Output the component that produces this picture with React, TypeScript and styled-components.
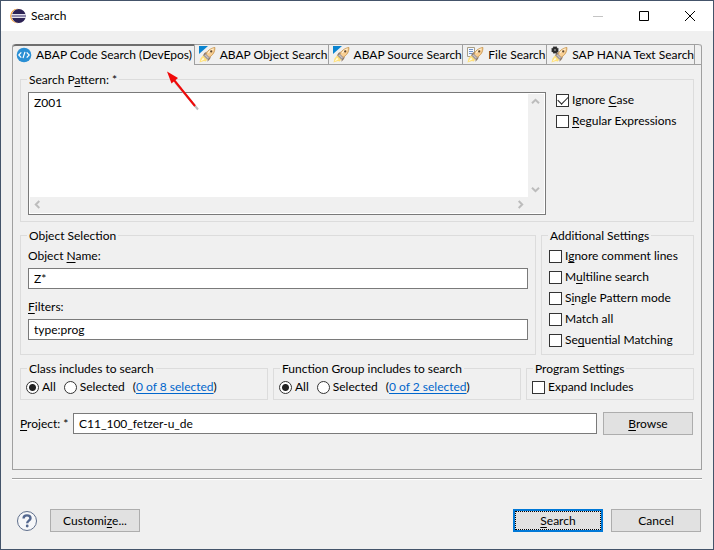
import React, { useState } from "react";
import styled, { createGlobalStyle, css } from "styled-components";

const GlobalStyle = createGlobalStyle`
  * { box-sizing: border-box; }
  body { margin: 0; background: #f0f0f0; }
  body, button, input, textarea {
    font-family: Lato, "Open Sans", sans-serif;
    font-size: 12px;
    line-height: 16px;
    color: #000;
  }
`;

const Dialog = styled.div`
  position: relative;
  display: flex;
  flex-direction: column;
  min-height: 100vh;
  border: 1px solid #44546a;
  background: #f0f0f0;
`;

const TitleBar = styled.header`
  display: flex;
  align-items: center;
  height: 30px;
  padding-left: 9px;
  gap: 5px;
  background: #fff;
`;

const Title = styled.h1`
  flex: 1;
  margin: 0;
  font-size: 12px;
  font-weight: 400;
`;

const CaptionButtons = styled.div`
  display: flex;
`;

const CaptionButton = styled.button`
  display: flex;
  align-items: center;
  justify-content: center;
  width: 46px;
  height: 28px;
  padding: 0;
  border: 0;
  background: none;
`;

const Folder = styled.main`
  display: flex;
  flex-direction: column;
  flex: 1;
  margin: 13px 11px 0;
  border: 1px solid #a0a0a0;
  border-top: 0;
  border-radius: 3px 3px 0 0;
`;

const TabBar = styled.div`
  display: grid;
  grid-template-columns: 182fr 134fr 135fr 84fr 148fr 6px;
  height: 21px;
`;

const Tab = styled.button<{ $active?: boolean }>`
  display: flex;
  align-items: center;
  gap: 4px;
  min-width: 0;
  border: 0;
  border-right: 1px solid #a0a0a0;
  background: none;
  white-space: nowrap;
  text-align: left;
  ${(p) =>
    p.$active
      ? css`
          padding: 0 0 2px 3px;
          border-top: 2px solid #6e6e6e;
          border-top-left-radius: 3px;
        `
      : css`
          padding: 0 0 0 4px;
          border-top: 1px solid #a0a0a0;
          border-bottom: 1px solid #a0a0a0;
        `}
  svg { flex: none; }
`;

const TabFiller = styled.div`
  border-top: 1px solid #a0a0a0;
  border-bottom: 1px solid #a0a0a0;
  border-top-right-radius: 3px;
`;

const Page = styled.div`
  display: flex;
  flex-direction: column;
  flex: 1;
  gap: 6px;
  padding: 7px 7px 33px;
`;

const Group = styled.fieldset`
  min-width: 0;
  margin: 0;
  padding: 0 7px;
  border: 1px solid #dcdcdc;
`;

const Legend = styled.legend`
  margin-left: -1px;
  padding: 0 2px;
  line-height: 15px;
`;

const PatternRow = styled.div`
  display: flex;
  gap: 10px;
  padding: 5px 0 6px;
`;

const EditorFrame = styled.div`
  display: grid;
  grid-template-columns: 1fr 16px;
  grid-template-rows: 1fr 16px;
  flex: 1;
  height: 123px;
  padding: 1px;
  border: 1px solid #7a7a7a;
  background: #fff;
`;

const Editor = styled.textarea`
  width: 100%;
  height: 100%;
  padding: 1px 4px;
  border: 0;
  outline: 0;
  resize: none;
  overflow: hidden;
  background: #fff;
`;

const ScrollTrack = styled.div<{ $horizontal?: boolean }>`
  display: flex;
  flex-direction: ${(p) => (p.$horizontal ? "row" : "column")};
  justify-content: space-between;
  background: #f0f0f0;
`;

const ScrollCorner = styled.div`
  background: #f0f0f0;
`;

const ScrollButton = styled.button`
  display: flex;
  align-items: center;
  justify-content: center;
  width: 15px;
  height: 15px;
  padding: 0;
  border: 0;
  background: none;
`;

const SideOptions = styled.div`
  width: 130px;
`;

const OptionStack = styled.div`
  display: flex;
  flex-direction: column;
  gap: 5px;
`;

const Choice = styled.label`
  display: flex;
  align-items: center;
  gap: 3px;
  height: 16px;
  white-space: nowrap;
`;

const CheckBox = styled.input.attrs({ type: "checkbox" })`
  appearance: none;
  flex: none;
  width: 13px;
  height: 13px;
  margin: 0;
  border: 1px solid #333;
  background: #fff;
  &:checked::after {
    content: "";
    display: block;
    width: 9px;
    height: 5px;
    margin: 2px 0 0 1px;
    border-left: 1px solid #222;
    border-bottom: 1px solid #222;
    transform: translateY(-1px) rotate(-45deg);
  }
`;

const Radio = styled.input.attrs({ type: "radio" })`
  appearance: none;
  flex: none;
  width: 13px;
  height: 13px;
  margin: 0;
  border: 1px solid #333;
  border-radius: 50%;
  background: #fff;
  &:checked {
    background: radial-gradient(circle, #222 3px, #fff 4px);
  }
`;

const SelectionRow = styled.div`
  display: grid;
  grid-template-columns: 1fr 153px;
  gap: 5px;
`;

const IncludesRow = styled.div`
  display: grid;
  grid-template-columns: 1fr 1fr 168px;
  gap: 5px;
`;

const FieldStack = styled.div`
  display: flex;
  flex-direction: column;
  gap: 10px;
  padding: 5px 0 14px;
`;

const Field = styled.div`
  display: flex;
  flex-direction: column;
  gap: 4px;
`;

const TextInput = styled.input.attrs({ type: "text" })`
  flex: 1 0 auto;
  min-width: 0;
  height: 21px;
  padding: 0 5px;
  border: 1px solid #7a7a7a;
  outline: 0;
  background: #fff;
`;

const OptionPadding = styled.div`
  padding: 5px 0 6px;
`;

const RadioRow = styled.div`
  display: flex;
  align-items: center;
  gap: 8px;
  margin-left: -2px;
  padding: 3px 0 4px;
  white-space: nowrap;
`;

const Link = styled.a`
  color: #0066cc;
  text-decoration: underline;
  text-underline-offset: 2px;
`;

const ProjectRow = styled.div`
  display: flex;
  align-items: center;
  gap: 6px;
  padding: 6px 1px 0 0;
`;

const ProjectLabel = styled.label`
  width: 47px;
  white-space: nowrap;
`;

const PushButton = styled.button<{ $primary?: boolean }>`
  width: 90px;
  height: 23px;
  padding: 0;
  border: ${(p) => (p.$primary ? "2px solid #0078d7" : "1px solid #adadad")};
  outline: ${(p) => (p.$primary ? "1px dotted #000" : "0")};
  outline-offset: -3px;
  background: #e1e1e1;
`;

const Separator = styled.hr`
  width: auto;
  height: 2px;
  margin: 8px 11px 0;
  border: 0;
  border-top: 1px solid #a0a0a0;
  border-bottom: 1px solid #fff;
`;

const Footer = styled.footer`
  display: flex;
  align-items: center;
  padding: 29px 12px 17px 15px;
  gap: 8px;
`;

const HelpButton = styled.button`
  display: flex;
  margin-right: 4px;
  padding: 0;
  border: 0;
  background: none;
`;

const Spacer = styled.div`
  flex: 1;
`;

const Mnemonic = styled.u`
  text-decoration: underline;
  text-decoration-skip-ink: none;
  text-underline-offset: 2px;
`;

const Pointer = styled.svg`
  position: absolute;
  left: 161px;
  top: 66px;
  pointer-events: none;
`;

/** Renders text in which the character after "&" is underlined. */
function Keyed({ text }: { text: string }) {
  const at = text.indexOf("&");
  if (at < 0) return <span>{text}</span>;
  return (
    <span>
      {text.slice(0, at)}
      <Mnemonic>{text[at + 1]}</Mnemonic>
      {text.slice(at + 2)}
    </span>
  );
}

function EclipseIcon() {
  return (
    <svg width="16" height="16" viewBox="0 0 16 16">
      <circle cx="7.4" cy="8" r="7.2" fill="#f7941e" />
      <circle cx="8.4" cy="8" r="7.1" fill="#fff" />
      <circle cx="8.8" cy="8" r="6.9" fill="#2c2255" />
      <path d="M1.7 6.5h14.2M1.7 9.5h14.2" stroke="#e4e2ee" strokeWidth="1" />
      <path d="M1.7 8h14.2" stroke="#8f89ad" strokeWidth="2" />
    </svg>
  );
}

function CodeIcon() {
  return (
    <svg width="16" height="16" viewBox="0 0 16 16">
      <circle cx="8" cy="8" r="7.3" fill="#2a8fd4" />
      <path
        d="M5.3 5.4 2.8 8l2.5 2.6M10.7 5.4 13.2 8l-2.5 2.6M9 4.9 7 11.1"
        fill="none"
        stroke="#fff"
        strokeWidth="1.2"
      />
    </svg>
  );
}

type Badge = "abap" | "file" | "hana";

function RocketIcon({ badge }: { badge: Badge }) {
  return (
    <svg width="17" height="17" viewBox="0 0 17 17">
      {badge === "abap" && <path d="M0 0h9L0 8z" fill="#0a84d0" />}
      {badge === "file" && (
        <g>
          <path d="M.5 1.5h7v9h-7z" fill="#f4f8ff" stroke="#a89f86" />
          <path d="M2 3.5h4M2 5.5h4M2 7.5h3" stroke="#6f92c8" />
        </g>
      )}
      <path d="M4 9.6 6.5 10l2 3-1.6 2.4-2-.4L.5 16.5l1-4z" fill="#ffe07a" />
      <path d="M4 11.6 1.5 15.5l4-2.3z" fill="#fffbe0" />
      <path d="M8 5.6 5.4 7 3.8 9.8l2.4-.4zM12.2 9.8l-1.2 3.2-2.6 2.8.4-3z" fill="#8f7a68" />
      <path
        d="M6.8 8.6C8.2 5 11 2.4 15.8 1.4c.4 4.4-2 7.8-5.8 10z"
        fill="#f8cf94"
        stroke="#c9964e"
        strokeWidth=".9"
      />
      <path d="M9 7C10.3 4.9 12 3.6 14.6 2.7" stroke="#fff0d4" strokeWidth="1.2" fill="none" />
      <path d="m6.6 7.6 4 4-2.2 2.2-3.6-3.6z" fill="#a39b9c" />
      <path d="m6.3 9 3 3" stroke="#d6d0d0" />
      <circle cx="12.2" cy="5.4" r="1.1" fill="#5c4630" />
      {badge === "hana" && (
        <g>
          <path d="M3 0v8M5 0v8M0 3h8M0 5h8" stroke="#444" strokeWidth=".9" />
          <path d="M2.5 1h3L7 2.5v3L5.5 7h-3L1 5.5v-3z" fill="#2e2e2e" />
          <path d="M3 3h2v2H3z" fill="#777" />
        </g>
      )}
    </svg>
  );
}

function Chevron({ turn }: { turn: number }) {
  return (
    <svg width="9" height="9" viewBox="0 0 9 9">
      <path
        d="M1 6.3 4.5 2.8 8 6.3"
        fill="none"
        stroke="#bcbcbc"
        strokeWidth="2"
        transform={`rotate(${turn} 4.5 4.5)`}
      />
    </svg>
  );
}

function Check({ text, initial = false }: { text: string; initial?: boolean }) {
  const [on, setOn] = useState(initial);
  return (
    <Choice>
      <CheckBox checked={on} onChange={() => setOn(!on)} />
      <Keyed text={text} />
    </Choice>
  );
}

function IncludesGroup({ title, name, link }: { title: string; name: string; link: string }) {
  return (
    <Group>
      <Legend>{title}</Legend>
      <RadioRow>
        <Choice>
          <Radio name={name} defaultChecked />
          All
        </Choice>
        <Choice>
          <Radio name={name} />
          Selected
        </Choice>
        <span>
          (<Link href="#">{link}</Link>)
        </span>
      </RadioRow>
    </Group>
  );
}

const searchTabs: { title: string; badge: Badge }[] = [
  { title: "ABAP Object Search", badge: "abap" },
  { title: "ABAP Source Search", badge: "abap" },
  { title: "File Search", badge: "file" },
  { title: "SAP HANA Text Search", badge: "hana" },
];

const additionalSettings = [
  "I&gnore comment lines",
  "M&ultiline search",
  "S&ingle Pattern mode",
  "Match all",
  "Se&quential Matching",
];

export default function App() {
  return (
    <>
      <GlobalStyle />
      <Dialog role="dialog" aria-label="Search">
        <TitleBar>
          <EclipseIcon />
          <Title>Search</Title>
          <CaptionButtons>
            <CaptionButton aria-label="Minimize" disabled>
              <svg width="10" height="10" viewBox="0 0 10 10">
                <path d="M0 5.5h10" stroke="#c4c4c4" />
              </svg>
            </CaptionButton>
            <CaptionButton aria-label="Maximize">
              <svg width="10" height="10" viewBox="0 0 10 10">
                <path d="M.5.5h9v9h-9z" fill="none" stroke="#000" />
              </svg>
            </CaptionButton>
            <CaptionButton aria-label="Close">
              <svg width="10" height="10" viewBox="0 0 10 10">
                <path d="m0 0 10 10M10 0 0 10" stroke="#000" />
              </svg>
            </CaptionButton>
          </CaptionButtons>
        </TitleBar>

        <Folder>
          <TabBar role="tablist">
            <Tab role="tab" aria-selected $active>
              <CodeIcon />
              ABAP Code Search (DevEpos)
            </Tab>
            {searchTabs.map((tab) => (
              <Tab key={tab.title} role="tab">
                <RocketIcon badge={tab.badge} />
                {tab.title}
              </Tab>
            ))}
            <TabFiller />
          </TabBar>

          <Page>
            <Group>
              <Legend>
                <label htmlFor="pattern">
                  <Keyed text="Search P&attern: *" />
                </label>
              </Legend>
              <PatternRow>
                <EditorFrame>
                  <Editor id="pattern" defaultValue="Z001" spellCheck={false} />
                  <ScrollTrack>
                    <ScrollButton aria-label="Scroll up">
                      <Chevron turn={0} />
                    </ScrollButton>
                    <ScrollButton aria-label="Scroll down">
                      <Chevron turn={180} />
                    </ScrollButton>
                  </ScrollTrack>
                  <ScrollTrack $horizontal>
                    <ScrollButton aria-label="Scroll left">
                      <Chevron turn={-90} />
                    </ScrollButton>
                    <ScrollButton aria-label="Scroll right">
                      <Chevron turn={90} />
                    </ScrollButton>
                  </ScrollTrack>
                  <ScrollCorner />
                </EditorFrame>
                <SideOptions>
                  <OptionStack>
                    <Check text="Ignore &Case" initial />
                    <Check text="&Regular Expressions" />
                  </OptionStack>
                </SideOptions>
              </PatternRow>
            </Group>

            <SelectionRow>
              <Group>
                <Legend>Object Selection</Legend>
                <FieldStack>
                  <Field>
                    <label htmlFor="object-name">
                      <Keyed text="Object &Name:" />
                    </label>
                    <TextInput id="object-name" defaultValue="Z*" />
                  </Field>
                  <Field>
                    <label htmlFor="filters">
                      <Keyed text="&Filters:" />
                    </label>
                    <TextInput id="filters" defaultValue="type:prog" />
                  </Field>
                </FieldStack>
              </Group>
              <Group>
                <Legend>Additional Settings</Legend>
                <OptionPadding>
                  <OptionStack>
                    {additionalSettings.map((text) => (
                      <Check key={text} text={text} />
                    ))}
                  </OptionStack>
                </OptionPadding>
              </Group>
            </SelectionRow>

            <IncludesRow>
              <IncludesGroup title="Class includes to search" name="class" link="0 of 8 selected" />
              <IncludesGroup title="Function Group includes to search" name="function" link="0 of 2 selected" />
              <Group>
                <Legend>Program Settings</Legend>
                <RadioRow>
                  <Check text="Expand Includes" />
                </RadioRow>
              </Group>
            </IncludesRow>

            <ProjectRow>
              <ProjectLabel htmlFor="project">
                <Keyed text="&Project: *" />
              </ProjectLabel>
              <TextInput id="project" defaultValue="C11_100_fetzer-u_de" />
              <PushButton>
                <Keyed text="&Browse" />
              </PushButton>
            </ProjectRow>
          </Page>
        </Folder>

        <Separator />

        <Footer>
          <HelpButton aria-label="Help">
            <svg width="22" height="22" viewBox="0 0 22 22">
              <circle cx="11" cy="11" r="9.5" fill="#f6f7f9" stroke="#5f6f8c" />
              <path
                d="M7.6 8.4C7.6 6.4 9 5.4 11 5.4s3.5 1 3.5 2.9c0 2.3-3.3 2.4-3.3 4.9"
                fill="none"
                stroke="#53678f"
                strokeWidth="2.4"
              />
              <circle cx="11.2" cy="16" r="1.4" fill="#53678f" />
            </svg>
          </HelpButton>
          <PushButton>
            <Keyed text="Customi&ze..." />
          </PushButton>
          <Spacer />
          <PushButton $primary>
            <Keyed text="&Search" />
          </PushButton>
          <PushButton>Cancel</PushButton>
        </Footer>

        <Pointer width="42" height="46" viewBox="0 0 42 46" aria-hidden="true">
          <path d="m13 15 23 27.5" stroke="#bdbdbd" strokeWidth="2" />
          <path d="m12 13 21 26" stroke="#f00a0a" strokeWidth="2" />
          <path d="M5 4.5 16 11 9.5 16.5z" fill="#f00a0a" />
        </Pointer>
      </Dialog>
    </>
  );
}
